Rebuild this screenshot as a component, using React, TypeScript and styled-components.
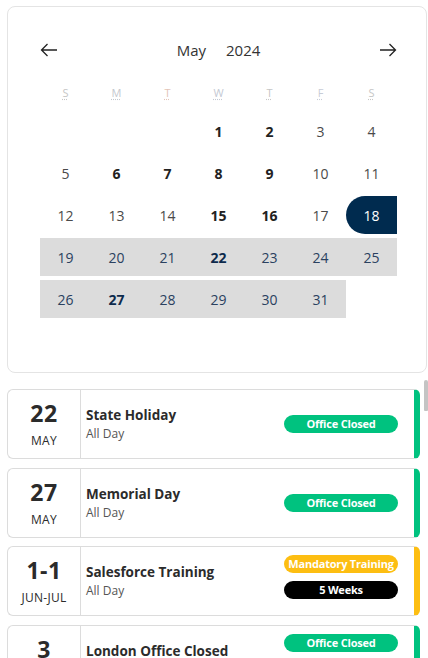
import styled, { createGlobalStyle } from "styled-components";

const GlobalStyle = createGlobalStyle`
  body {
    margin: 0;
    background: #ffffff;
    font-family: "Open Sans", "Noto Sans", sans-serif;
    color: #333333;
  }
  * {
    box-sizing: border-box;
  }
`;

const Page = styled.div`
  width: 428px;
  height: 658px;
  padding: 6px 0 0 7px;
  overflow: hidden;
`;

const CalendarCard = styled.div`
  width: 420px;
  height: 367px;
  border: 1px solid #e4e4e4;
  border-radius: 8px;
  padding: 29px 0 0 32px;
`;

const Header = styled.div`
  width: 357px;
  height: 28px;
  display: flex;
  align-items: center;
  justify-content: space-between;
`;

const NavButton = styled.button`
  border: none;
  background: none;
  padding: 0;
  width: 18px;
  height: 14px;
  display: flex;
  cursor: pointer;
`;

const MonthYear = styled.div`
  display: flex;
  gap: 20px;
  font-size: 15px;
  color: #333333;
`;

const WeekRow = styled.div`
  margin-top: 20px;
  display: grid;
  grid-template-columns: repeat(7, 51px);
  height: 16px;
  align-items: center;
`;

const WeekDay = styled.abbr<{ $tint: string }>`
  justify-self: center;
  font-size: 11px;
  color: ${({ $tint }) => $tint};
  text-decoration: underline dotted;
  text-underline-offset: 2px;
`;

const DayGrid = styled.div`
  margin-top: 12px;
  display: grid;
  grid-template-columns: repeat(7, 51px);
  grid-auto-rows: 38px;
  row-gap: 4px;
`;

type DayKind = "plain" | "busy" | "range" | "rangeBusy" | "selected";

const dayColor: Record<DayKind, string> = {
  plain: "#4a4a4a",
  busy: "#222222",
  range: "#2a4160",
  rangeBusy: "#0d2a4c",
  selected: "#ffffff",
};

const DayCell = styled.div<{ $kind: DayKind }>`
  display: flex;
  align-items: center;
  justify-content: center;
  font-size: 14px;
  font-weight: ${({ $kind }) => ($kind === "busy" || $kind === "rangeBusy" ? 700 : 400)};
  color: ${({ $kind }) => dayColor[$kind]};
  background: ${({ $kind }) =>
    $kind === "selected" ? "#002b4f" : $kind === "range" || $kind === "rangeBusy" ? "#dcdcdc" : "transparent"};
  border-radius: ${({ $kind }) => ($kind === "selected" ? "19px 0 0 19px" : "0")};
`;

const ListFrame = styled.div`
  position: relative;
  margin-top: 7px;
  width: 421px;
  height: 278px;
`;

const EventList = styled.div`
  height: 100%;
  overflow-y: auto;
  scrollbar-width: none;
  padding-top: 9px;
  display: flex;
  flex-direction: column;
  gap: 8.6px;

  &::-webkit-scrollbar {
    display: none;
  }
`;

const ScrollThumb = styled.div`
  position: absolute;
  top: 0;
  right: 0;
  width: 4px;
  height: 31px;
  border-radius: 2px 2px 1px 1px;
  background: #c4c4c4;
`;

const EventCard = styled.div<{ $accent: string }>`
  flex: none;
  width: 413px;
  height: 70px;
  display: flex;
  border: 1px solid #dcdcdc;
  border-right: 6px solid ${({ $accent }) => $accent};
  border-radius: 6px;
`;

const DateCol = styled.div`
  width: 73px;
  flex: none;
  border-right: 1px solid #dcdcdc;
  display: flex;
  flex-direction: column;
  align-items: center;
  justify-content: center;
  color: #2b2b2b;
`;

const DateNum = styled.div`
  font-size: 23px;
  font-weight: 700;
  line-height: 28px;
  letter-spacing: 0.5px;
`;

const DateMonth = styled.div`
  font-size: 12px;
  line-height: 16px;
  margin-top: 6px;
  letter-spacing: 0.3px;
`;

const EventBody = styled.div`
  flex: 1;
  padding-left: 5px;
  display: flex;
  flex-direction: column;
  justify-content: center;
  gap: 1px;
`;

const EventTitle = styled.div`
  font-size: 13.5px;
  font-weight: 700;
  color: #2b2b2b;
`;

const EventTime = styled.div`
  font-size: 12px;
  color: #555555;
`;

const BadgeStack = styled.div<{ $lift: number }>`
  width: 114px;
  margin-right: 16px;
  padding-bottom: ${({ $lift }) => $lift}px;
  display: flex;
  flex-direction: column;
  justify-content: center;
  gap: 8px;
`;

const Badge = styled.div<{ $bg: string }>`
  height: 18px;
  border-radius: 9px;
  background: ${({ $bg }) => $bg};
  color: #ffffff;
  font-size: 11px;
  font-weight: 700;
  line-height: 18px;
  text-align: center;
  white-space: nowrap;
  letter-spacing: -0.2px;
`;

const GREEN = "#00c27f";
const YELLOW = "#fdbe12";
const BLACK = "#000000";

const Arrow = ({ dir }: { dir: "left" | "right" }) => (
  <svg width="18" height="14" viewBox="0 0 18 14" fill="none" stroke="#222" strokeWidth="1.3">
    {dir === "left" ? (
      <path d="M17 7H1.5M7.5 1L1.5 7l6 6" />
    ) : (
      <path d="M1 7h15.5M10.5 1l6 6-6 6" />
    )}
  </svg>
);

const weekDays = [
  { l: "S", t: "Sunday", c: "#c6c6c6" },
  { l: "M", t: "Monday", c: "#c4c8ce" },
  { l: "T", t: "Tuesday", c: "#e3c4b8" },
  { l: "W", t: "Wednesday", c: "#c4c9d3" },
  { l: "T", t: "Thursday", c: "#c6c6c6" },
  { l: "F", t: "Friday", c: "#c8ccd6" },
  { l: "S", t: "Saturday", c: "#c6c6c6" },
];

const busyDays = [1, 2, 6, 7, 8, 9, 15, 16, 22, 27];
const selectedDay = 18;
const rangeEnd = 31;

const kindOf = (d: number): DayKind => {
  if (d === selectedDay) return "selected";
  const busy = busyDays.includes(d);
  if (d > selectedDay && d <= rangeEnd) return busy ? "rangeBusy" : "range";
  return busy ? "busy" : "plain";
};

type CalEvent = {
  day: string;
  month: string;
  title: string;
  time: string;
  accent: string;
  badges: { text: string; bg: string }[];
};

const closed = { text: "Office Closed", bg: GREEN };

const events: CalEvent[] = [
  { day: "22", month: "MAY", title: "State Holiday", time: "All Day", accent: GREEN, badges: [closed] },
  { day: "27", month: "MAY", title: "Memorial Day", time: "All Day", accent: GREEN, badges: [closed] },
  {
    day: "1-1",
    month: "JUN-JUL",
    title: "Salesforce Training",
    time: "All Day",
    accent: YELLOW,
    badges: [
      { text: "Mandatory Training", bg: YELLOW },
      { text: "5 Weeks", bg: BLACK },
    ],
  },
  {
    day: "3",
    month: "JUN",
    title: "London Office Closed",
    time: "All Day",
    accent: GREEN,
    badges: [closed, { text: "London Only", bg: BLACK }],
  },
  { day: "19", month: "JUN", title: "Juneteenth", time: "All Day", accent: GREEN, badges: [closed] },
  { day: "4", month: "JUL", title: "Independence Day", time: "All Day", accent: GREEN, badges: [closed] },
];

const days = Array.from({ length: 31 }, (_, i) => i + 1);
const leadingBlanks = 3; // May 1 2024 is a Wednesday

export default function App() {
  return (
    <>
      <GlobalStyle />
      <Page>
        <CalendarCard>
          <Header>
            <NavButton aria-label="Previous month">
              <Arrow dir="left" />
            </NavButton>
            <MonthYear>
              <span>May</span>
              <span>2024</span>
            </MonthYear>
            <NavButton aria-label="Next month">
              <Arrow dir="right" />
            </NavButton>
          </Header>
          <WeekRow>
            {weekDays.map((w, i) => (
              <WeekDay key={i} title={w.t} $tint={w.c}>
                {w.l}
              </WeekDay>
            ))}
          </WeekRow>
          <DayGrid>
            {Array.from({ length: leadingBlanks }, (_, i) => (
              <div key={`b${i}`} />
            ))}
            {days.map((d) => (
              <DayCell key={d} $kind={kindOf(d)}>
                {d}
              </DayCell>
            ))}
          </DayGrid>
        </CalendarCard>

        <ListFrame>
          <EventList>
            {events.map((ev, i) => (
              <EventCard key={i} $accent={ev.accent}>
                <DateCol>
                  <DateNum>{ev.day}</DateNum>
                  <DateMonth>{ev.month}</DateMonth>
                </DateCol>
                <EventBody>
                  <EventTitle>{ev.title}</EventTitle>
                  <EventTime>{ev.time}</EventTime>
                </EventBody>
                <BadgeStack $lift={ev.badges.length > 1 ? 8 : 0}>
                  {ev.badges.map((b) => (
                    <Badge key={b.text} $bg={b.bg}>
                      {b.text}
                    </Badge>
                  ))}
                </BadgeStack>
              </EventCard>
            ))}
          </EventList>
          <ScrollThumb />
        </ListFrame>
      </Page>
    </>
  );
}
